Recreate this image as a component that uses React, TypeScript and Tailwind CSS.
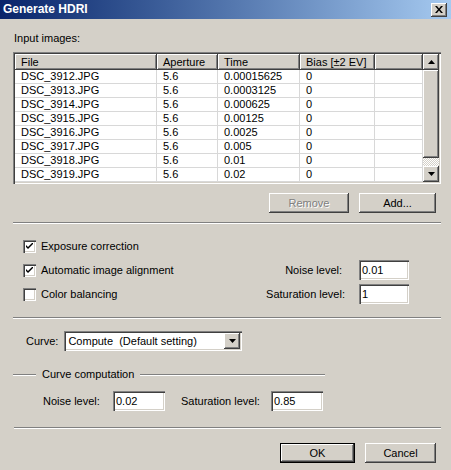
import React from 'react';

const raised =
  'bg-[#d4d0c8] shadow-[inset_-1px_-1px_0_#404040,inset_1px_1px_0_#ffffff,inset_-2px_-2px_0_#808080,inset_2px_2px_0_#d4d0c8]';
const sunken =
  'bg-white shadow-[inset_1px_1px_0_#808080,inset_2px_2px_0_#404040,inset_-1px_-1px_0_#ffffff,inset_-2px_-2px_0_#d4d0c8]';

const rows = [
  ['DSC_3912.JPG', '5.6', '0.00015625', '0'],
  ['DSC_3913.JPG', '5.6', '0.0003125', '0'],
  ['DSC_3914.JPG', '5.6', '0.000625', '0'],
  ['DSC_3915.JPG', '5.6', '0.00125', '0'],
  ['DSC_3916.JPG', '5.6', '0.0025', '0'],
  ['DSC_3917.JPG', '5.6', '0.005', '0'],
  ['DSC_3918.JPG', '5.6', '0.01', '0'],
  ['DSC_3919.JPG', '5.6', '0.02', '0'],
];

const cols = [
  { name: 'File', w: 'w-[142px]' },
  { name: 'Aperture', w: 'w-[61px]' },
  { name: 'Time', w: 'w-[82px]' },
  { name: 'Bias [±2 EV]', w: 'w-[75px]' },
  { name: '', w: 'w-[48px]' },
];

const Separator = ({ className = '' }: { className?: string }) => (
  <div className={`h-[2px] border-t border-t-[#808080] border-b border-b-white ${className}`}></div>
);

const Button = ({ label, w, disabled, isDefault }: { label: string; w: string; disabled?: boolean; isDefault?: boolean }) => (
  <div className={`${w} h-[20px] ${isDefault ? 'border border-black' : ''}`}>
    <div className={`${raised} w-full h-full flex items-center justify-center`}>
      <span className={disabled ? 'text-[#808080] [text-shadow:1px_1px_0_#ffffff]' : 'text-black'}>{label}</span>
    </div>
  </div>
);

const Checkbox = ({ checked, label }: { checked: boolean; label: string }) => (
  <div className="flex items-center gap-[5px]">
    <div className={`${sunken} w-[13px] h-[13px] flex items-center justify-center`}>
      {checked && (
        <svg width="7" height="7" viewBox="0 0 7 7">
          <path d="M0 2 L0 4 L2 6 L7 1 L7 -1 L2 4 Z" fill="#000" />
        </svg>
      )}
    </div>
    <span>{label}</span>
  </div>
);

const Input = ({ value, w }: { value: string; w: string }) => (
  <div className={`${sunken} ${w} h-[20px] flex items-center pl-[3px]`}>{value}</div>
);

const Arrow = ({ up }: { up?: boolean }) => (
  <svg width="7" height="4" viewBox="0 0 7 4">
    <path d={up ? 'M3.5 0 L7 4 L0 4 Z' : 'M0 0 L7 0 L3.5 4 Z'} fill="#000" />
  </svg>
);

export default function App() {
  return (
    <div className="w-[451px] h-[470px] bg-[#d4d0c8] font-['Liberation_Sans',Arial,sans-serif] text-[11px] text-black overflow-hidden leading-[13px]">
      {/* Title bar */}
      <div className="h-[19px] bg-gradient-to-r from-[#0a246a] to-[#a6caf0] flex items-center justify-between pl-[3px] pr-[4px]">
        <span className="text-white font-bold text-[12px]">Generate HDRI</span>
        <div className={`${raised} w-[16px] h-[14px] flex items-center justify-center`}>
          <svg width="8" height="7" viewBox="0 0 8 7">
            <path d="M0 0 L2 0 L4 2.5 L6 0 L8 0 L5 3.5 L8 7 L6 7 L4 4.5 L2 7 L0 7 L3 3.5 Z" fill="#000" />
          </svg>
        </div>
      </div>

      <div className="pl-[13px] pr-[10px]">
        <div className="mt-[13px] ml-[1px]">Input images:</div>

        {/* List view */}
        <div className={`${sunken} mt-[7px] h-[132px] p-[2px] flex`}>
          <div className="flex-1 flex flex-col">
            <div className="flex h-[17px]">
              {cols.map((c, i) => (
                <div key={i} className={`${c.w} ${raised} h-full flex items-center pl-[6px] truncate`}>
                  {c.name}
                </div>
              ))}
            </div>
            {rows.map((r, i) => (
              <div key={i} className="flex h-[14px]">
                {cols.map((c, j) => (
                  <div key={j} className={`${c.w} h-full pl-[6px] border-r border-b border-[#d8d8d8] flex items-center`}>
                    {r[j] ?? ''}
                  </div>
                ))}
              </div>
            ))}
          </div>
          {/* Scrollbar */}
          <div className="w-[16px] flex flex-col">
            <div className={`${raised} h-[16px] flex items-center justify-center`}>
              <Arrow up />
            </div>
            <div className={`${raised} h-[88px]`}></div>
            <div className="flex-1 bg-[repeating-conic-gradient(#ffffff_0_25%,#d4d0c8_0_50%)] bg-[length:2px_2px]"></div>
            <div className={`${raised} h-[16px] flex items-center justify-center`}>
              <Arrow />
            </div>
          </div>
        </div>

        <div className="flex justify-end gap-[10px] mt-[9px] pr-[5px]">
          <Button label="Remove" w="w-[80px]" disabled />
          <Button label="Add..." w="w-[77px]" />
        </div>

        <Separator className="mt-[9px]" />

        {/* Options */}
        <div className="mt-[10px] pl-[10px] pr-[32px]">
          <div className="h-[24px] flex items-center">
            <Checkbox checked label="Exposure correction" />
          </div>
          <div className="h-[24px] flex items-center justify-between">
            <Checkbox checked label="Automatic image alignment" />
            <div className="flex items-center">
              <span className="mr-[17px]">Noise level:</span>
              <Input value="0.01" w="w-[50px]" />
            </div>
          </div>
          <div className="h-[24px] flex items-center justify-between">
            <Checkbox checked={false} label="Color balancing" />
            <div className="flex items-center">
              <span className="mr-[14px]">Saturation level:</span>
              <Input value="1" w="w-[50px]" />
            </div>
          </div>
        </div>

        <Separator className="mt-[11px]" />

        {/* Curve */}
        <div className="mt-[12px] ml-[13px] flex items-center">
          <span className="mr-[6px]">Curve:</span>
          <div className={`${sunken} w-[178px] h-[20px] flex items-center pl-[4px] pr-[2px]`}>
            <span className="flex-1">Compute&nbsp;&nbsp;(Default setting)</span>
            <div className={`${raised} w-[16px] h-[16px] flex items-center justify-center`}>
              <Arrow />
            </div>
          </div>
        </div>

        <div className="mt-[17px] flex items-center w-[312px]">
          <Separator className="w-[23px]" />
          <span className="mx-[6px]">Curve computation</span>
          <Separator className="flex-1" />
        </div>

        <div className="mt-[10px] ml-[30px] flex items-center">
          <span className="w-[70px]">Noise level:</span>
          <Input value="0.02" w="w-[52px]" />
          <span className="ml-[16px] w-[90px]">Saturation level:</span>
          <Input value="0.85" w="w-[52px]" />
        </div>

        <Separator className="mt-[16px] ml-[1px]" />

        <div className="flex justify-end gap-[10px] mt-[14px] pr-[5px]">
          <Button label="OK" w="w-[75px]" isDefault />
          <Button label="Cancel" w="w-[71px]" />
        </div>
      </div>
    </div>
  );
}
